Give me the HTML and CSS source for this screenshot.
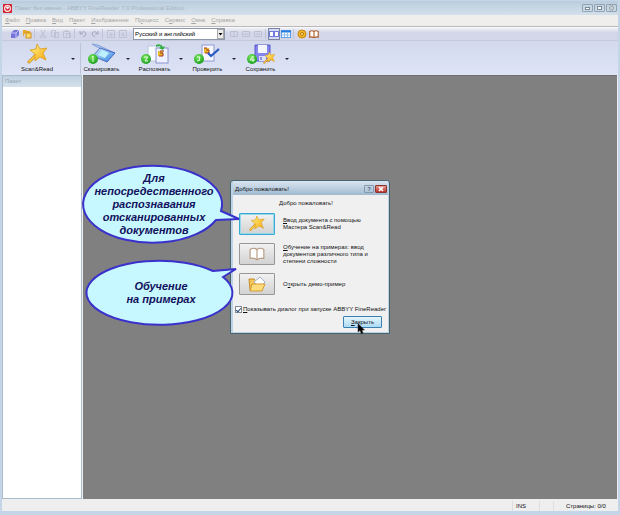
FILE: index.html
```html
<!DOCTYPE html>
<html lang="ru">
  <head>
    <meta charset="UTF-8" />
    <meta name="viewport" content="width=device-width, initial-scale=1.0" />
    <title>ABBYY FineReader</title>
    <link rel="stylesheet" href="styles.css" />
  </head>
  <body>
    <svg class="defs" width="0" height="0">
      <defs>
        <linearGradient id="gold" x1="0" y1="0" x2="1" y2="1">
          <stop offset="0" stop-color="#fff68a" />
          <stop offset="1" stop-color="#f7a50e" />
        </linearGradient>
        <linearGradient id="blue" x1="0" y1="0" x2="1" y2="1">
          <stop offset="0" stop-color="#d8f2ff" />
          <stop offset="1" stop-color="#2f7fe0" />
        </linearGradient>
        <radialGradient id="green" cx="0.4" cy="0.3" r="0.8">
          <stop offset="0" stop-color="#7be860" />
          <stop offset="1" stop-color="#0c9414" />
        </radialGradient>
        <g id="wand">
          <path d="M9 11 L2 18" stroke="#c98a1c" stroke-width="3" stroke-linecap="round" />
          <path d="M9 11 L2 18" stroke="#ffd044" stroke-width="1.6" stroke-linecap="round" />
          <path d="M10 0 L13 5 L20 4 L16 9 L19 16 L13 13 L8 17 L8 10 L3 6 L9 5 Z" fill="url(#gold)" stroke="#dc9a18" stroke-width="0.8" />
        </g>
        <g id="book">
          <path d="M1 2 Q4 0 7 2 Q10 0 13 2 V10 Q10 9 7 11 Q4 9 1 10 Z" fill="#fff" stroke="currentColor" />
          <path d="M7 2 V11" stroke="currentColor" />
        </g>
      </defs>
    </svg>

    <header class="titlebar">
      <svg class="logo" viewBox="0 0 10 10">
        <rect width="10" height="10" rx="1" fill="#d91f2c" />
        <circle cx="5" cy="5" r="3.2" fill="none" stroke="#fff" stroke-width="1.2" />
        <path d="M3 4 Q5 2 7 4 L5 6 Z" fill="#fff" />
      </svg>
      <span class="caption">Пакет без имени - ABBYY FineReader 7.0 Professional Edition</span>
      <div class="window-buttons">
        <button aria-label="Свернуть"><svg viewBox="0 0 9 6"><rect x="2.5" y="2.5" width="4" height="2" fill="#fff" stroke="#7c8996" /></svg></button>
        <button aria-label="Развернуть"><svg viewBox="0 0 9 6"><rect x="2.5" y="1.5" width="4" height="3" fill="#fff" stroke="#7c8996" /></svg></button>
        <button aria-label="Закрыть окно"><svg viewBox="0 0 9 6"><path d="M2.500 1 L6.500 5 M6.500 1 L2.500 5" stroke="#7c8996" stroke-width="2.4" /><path d="M2.500 1 L6.500 5 M6.500 1 L2.500 5" stroke="#fff" /></svg></button>
      </div>
    </header>

    <nav class="menu">
      <button><u>Ф</u>айл</button>
      <button><u>П</u>равка</button>
      <button><u>В</u>ид</button>
      <button>П<u>а</u>кет</button>
      <button><u>И</u>зображение</button>
      <button>П<u>р</u>оцесс</button>
      <button>С<u>е</u>рвис</button>
      <button><u>О</u>кна</button>
      <button><u>С</u>правка</button>
    </nav>

    <div class="toolbar">
      <div class="tools">
        <button aria-label="Новый пакет"><svg viewBox="0 0 10 10"><path d="M1 4 L4 1 H9 V6 L6 9 H1 Z" fill="#7774d8" /><path d="M1 4 H6 V9 M6 4 L9 1" stroke="#c4c4ff" fill="none" /></svg></button>
        <button aria-label="Открыть пакет"><svg viewBox="0 0 10 10"><path d="M1 1 H4 L5 2 H8 V4 H3 L1 8 Z" fill="#e8a720" /><rect x="4" y="4" width="5" height="5" fill="#ffd968" stroke="#d09020" /></svg></button>
      </div>
      <div class="tools">
        <button disabled aria-label="Вырезать"><svg viewBox="0 0 10 10"><path d="M3 1 L6 7 M7 1 L4 7" /><circle cx="3" cy="8" r="1" /><circle cx="7" cy="8" r="1" /></svg></button>
        <button disabled aria-label="Копировать"><svg viewBox="0 0 10 10"><path d="M1.5 1.5 h4 v6 h-4 Z M4.5 3.5 h4 v5 h-4 Z" /></svg></button>
        <button disabled aria-label="Вставить"><svg viewBox="0 0 10 10"><path d="M1.5 2.5 h6 v6 h-6 Z M3.5 1.5 h2 M4.5 4.5 h4 v4 h-4 Z" /></svg></button>
      </div>
      <div class="tools">
        <button disabled aria-label="Отменить"><svg viewBox="0 0 10 10"><path d="M2 2 V5 H5 M2 5 Q5 1 8 4 Q8 7 5 8" stroke="#a2a8c0" /></svg></button>
        <button disabled aria-label="Вернуть"><svg viewBox="0 0 10 10"><path d="M8 2 V5 H5 M8 5 Q5 1 2 4 Q2 7 5 8" stroke="#a2a8c0" /></svg></button>
      </div>
      <div class="tools">
        <button disabled aria-label="Предыдущая"><svg viewBox="0 0 10 10"><path d="M1.5 1.5 h7 v7 h-7 Z M5 3 v4 M3 5 l2 2 l2 -2" /></svg></button>
        <button disabled aria-label="Следующая"><svg viewBox="0 0 10 10"><path d="M1.5 1.5 h7 v7 h-7 Z M5 3 v4 M3 5 l2 2 l2 -2" /></svg></button>
      </div>
      <div class="language">
        <select aria-label="Язык распознавания">
          <option>Русский и английский</option>
        </select>
        <svg viewBox="0 0 7 10"><rect x="0.5" y="0.5" width="6" height="9" fill="#ececec" stroke="#a8a8a8" /><path d="M1.5 4 h4 l-2 2.5 Z" fill="#000" /></svg>
      </div>
      <div class="tools">
        <button disabled aria-label="Блок"><svg viewBox="0 0 10 10"><path d="M1.5 2.5 h7 v5 h-7 Z M5 3 v4" /></svg></button>
        <button disabled aria-label="Текст"><svg viewBox="0 0 10 10"><path d="M1.5 2.5 h7 v5 h-7 Z M2 5 h6" /></svg></button>
        <button disabled aria-label="Таблица"><svg viewBox="0 0 10 10"><path d="M1.5 2.5 h7 v5 h-7 Z M3 5 h4" /></svg></button>
      </div>
      <div class="tools">
        <button class="pressed" aria-label="Эскизы"><svg viewBox="0 0 10 10"><rect x="0.5" y="2.5" width="4" height="5" fill="#fff" stroke="#6d7de0" /><rect x="5.5" y="2.5" width="4" height="5" fill="#fff" stroke="#6d7de0" /></svg></button>
        <button aria-label="Список"><svg viewBox="0 0 10 10"><rect x="0.5" y="1.5" width="9" height="7" fill="#fff" stroke="#5ba0e8" /><path d="M0 2.5h10" stroke="#287ae0" stroke-width="2" /><path d="M1 6h8 M3.5 4v4 M6.5 4v4" stroke="#8cbcf0" /></svg></button>
      </div>
      <div class="tools">
        <button aria-label="Настройки"><svg viewBox="0 0 10 10"><circle cx="5" cy="5" r="4" fill="#f3b928" stroke="#c68612" /><circle cx="5" cy="5" r="1.5" fill="#fff0a0" stroke="#b87400" /></svg></button>
        <button aria-label="Справка"><svg viewBox="0 0 14 12" color="#b0602c"><use href="#book" stroke-width="1.6" /></svg></button>
      </div>
    </div>

    <div class="actions">
      <div class="action wizard">
        <button class="run"><svg viewBox="0 0 28 21"><use href="#wand" x="4" y="1" /></svg>Scan&amp;Read</button>
        <button class="more" aria-label="Ещё"></button>
      </div>
      <div class="action">
        <button class="run">
          <svg viewBox="0 0 28 21">
            <path d="M4 1 L10 2 L27 10 L25 11 L7 3 Z" fill="#a9c5f2" stroke="#6385c8" stroke-width="0.6" />
            <path d="M5 13 L12 5 L27 10 L19 19 Z" fill="url(#blue)" stroke="#3b55b8" stroke-width="0.8" />
            <path d="M10 12 L14 7 L21 10 L17 15 Z" fill="#bdf0ff" />
            <circle cx="5" cy="16" r="5" fill="url(#green)" />
            <path d="M4 14 l1 -1 v6" stroke="#e6ffe0" fill="none" />
          </svg>Сканировать
        </button>
        <button class="more" aria-label="Ещё"></button>
      </div>
      <div class="action">
        <button class="run">
          <svg viewBox="0 0 28 21">
            <rect x="7" y="3" width="10" height="15" fill="#f8fbff" stroke="#bcc6dd" />
            <rect x="15" y="5" width="12" height="15" fill="#eef1ff" stroke="#8c93cc" />
            <rect x="17" y="8" width="5" height="5" fill="#e8bd2d" />
            <path d="M19 8 h4 M19 10 h3 v3 h-4" stroke="#a62f20" fill="none" />
            <path d="M15 2 Q20 0 22 4 L24 3 L22 7 L18 5 L20 4 Q18 2 15 4 Z" fill="#2cae3c" />
            <circle cx="5" cy="16" r="5" fill="url(#green)" />
            <path d="M3 14 h4 l-3 4 h3" stroke="#e6ffe0" fill="none" />
          </svg>Распознать
        </button>
        <button class="more" aria-label="Ещё"></button>
      </div>
      <div class="action">
        <button class="run">
          <svg viewBox="0 0 28 21">
            <rect x="8" y="2" width="12" height="16" fill="#f5f6ff" stroke="#9299d0" />
            <rect x="10" y="5" width="5" height="5" fill="#e8bd2d" />
            <path d="M10 5 h3 M12 7 h3 v3 h-4" stroke="#a62f20" fill="none" />
            <path d="M14 10 L17 13 L25 6" stroke="#2759c0" stroke-width="2.2" fill="none" />
            <circle cx="5" cy="16" r="5" fill="url(#green)" />
            <path d="M3 14 h3 l-1 2 l1 1 l-3 1" stroke="#e6ffe0" fill="none" />
          </svg>Проверить
        </button>
        <button class="more" aria-label="Ещё"></button>
      </div>
      <div class="action">
        <button class="run">
          <svg viewBox="0 0 28 21">
            <path d="M8 2 h15 v16 h-15 Z" fill="#8585ed" stroke="#5656c6" />
            <rect x="11" y="2" width="9" height="8" fill="#f4f6ff" />
            <rect x="12" y="13" width="7" height="5" fill="#dcdffa" />
            <path d="M14 14 v3" stroke="#4545b5" />
            <use href="#wand" transform="translate(16 9) scale(0.6)" />
            <circle cx="5" cy="16" r="5" fill="url(#green)" />
            <path d="M6 13 v6 M6 13 l-3 4 h5" stroke="#e6ffe0" fill="none" />
          </svg>Сохранить
        </button>
        <button class="more" aria-label="Ещё"></button>
      </div>
    </div>

    <div class="workspace">
      <aside class="batch"><h2>Пакет</h2></aside>
      <main></main>
    </div>

    <footer class="status">
      <span class="cell">INS</span>
      <span class="cell"></span>
      <span class="cell pages">Страницы: 0/0</span>
    </footer>

    <div class="overlay">
      <div class="dialog" role="dialog" aria-labelledby="dialog-title">
        <div class="dialog-title">
          <span id="dialog-title">Добро пожаловать!</span>
          <button class="help" aria-label="Помощь">?</button>
          <button class="close" aria-label="Закрыть"><svg viewBox="0 0 12 8"><path d="M4 2 L8 6 M8 2 L4 6" stroke="#fff" stroke-width="1.6" /></svg></button>
        </div>
        <div class="dialog-body">
          <p class="welcome">Добро пожаловать!</p>
          <div class="choices">
            <button id="wizard" class="choice focused"><svg width="16" height="16" viewBox="0 0 21 21"><use href="#wand" /></svg></button>
            <label for="wizard"><u>В</u>вод документа с помощью<br />Мастера Scan&amp;Read</label>
            <button id="samples" class="choice"><svg width="16" height="14" viewBox="0 0 14 12" color="#b59a80"><use href="#book" /></svg></button>
            <label for="samples"><u>О</u>бучение на примерах: ввод<br />документов различного типа и<br />степени сложности</label>
            <button id="demo" class="choice">
              <svg width="18" height="16" viewBox="0 0 18 16">
                <path d="M1 3 H6 L8 5 V14 H2 Z" fill="#f5c65a" stroke="#c48c28" />
                <path d="M6 6 L12 1 L17 6 L12 12 Z" fill="#fff" stroke="#9fb4cc" />
                <path d="M4 8 H17 L14 15 H2 Z" fill="#ffdc7c" stroke="#d29a30" />
              </svg>
            </button>
            <label for="demo">О<u>т</u>крыть демо-пример</label>
          </div>
          <label class="show"><input type="checkbox" checked /><span><u>П</u>оказывать диалог при запуске ABBYY FineReader</span></label>
          <div class="dialog-footer"><button class="ok"><u>З</u>акрыть</button></div>
        </div>

        <div class="callout callout-wizard">
          <svg viewBox="0 0 158 80"><path d="M138 47 L156 55 L133 56 A69.500 38.500 0 1 1 138 47 Z" /></svg>
          <p>Для<br />непосредественного<br />распознавания<br />отсканированных<br />документов</p>
        </div>
        <div class="callout callout-samples">
          <svg viewBox="0 0 152 68"><path d="M127 12 L150 10 L137 18 A73 32 0 1 1 127 12 Z" /></svg>
          <p>Обучение<br />на примерах</p>
        </div>
        <svg class="cursor" viewBox="0 0 8 12"><path d="M1 0.500 V9 L3 7.500 L4.500 11 L6 10 L5 7 H7.500 Z" fill="#000" stroke="#333" stroke-width="0.500" /></svg>
      </div>
    </div>
  </body>
</html>
```

FILE: styles.css
```css
* {
  box-sizing: border-box;
}
body {
  margin: 0;
  min-height: 100vh;
  display: flex;
  flex-direction: column;
  position: relative;
  border: solid #c3d5e6;
  border-width: 1px 2px 4px;
  background: #efeeee;
  color: #111;
  font: 6px/8px "Liberation Sans", Arial, sans-serif;
}
button,
select {
  font: inherit;
  color: inherit;
  margin: 0;
  padding: 0;
  border: 0;
  background: none;
}
svg {
  display: block;
  fill: none;
}
p,
h2 {
  margin: 0;
}
.defs {
  position: absolute;
}

/* title and menu */
.titlebar {
  display: flex;
  align-items: center;
  height: 14px;
  padding: 0 1px;
  gap: 3px;
  background: linear-gradient(#bacddd, #d3e0ec);
}
.logo {
  width: 9px;
  height: 9px;
}
.caption {
  flex: 1;
  color: #a3b2c1;
}
.window-buttons {
  display: flex;
  gap: 1px;
}
.window-buttons button {
  width: 11px;
  height: 8px;
  border: 1px solid #94a3b1;
  border-radius: 1px;
}
.menu {
  display: flex;
  gap: 6px;
  height: 12px;
  padding: 0 3px 2px;
  border-bottom: 1px solid #b9b9b9;
  background: #efeeec;
  color: #a5a5a5;
}

/* small toolbar */
.toolbar {
  display: flex;
  align-items: center;
  height: 14px;
  padding-left: 5px;
  border-top: 1px solid #f8f9fc;
  border-bottom: 1px solid #c5c9da;
  background: linear-gradient(#f0f1f7, #d2d6e8 40%);
}
.tools {
  display: flex;
  gap: 2px;
  padding: 0 2px 0 3px;
}
.tools + .tools {
  border-left: 1px solid #c0c4d6;
}
.tools button {
  width: 10px;
  height: 10px;
}
.tools button:disabled {
  stroke: #bdc1d0;
}
.tools .pressed {
  background: #d5daf0;
  outline: 1px solid #7c84a4;
}
.language {
  position: relative;
  width: 92px;
  margin: 0 1px 0 3px;
}
.language select {
  display: block;
  width: 100%;
  height: 12px;
  padding-left: 1px;
  border: 1px solid #8d98a8;
  background: #fff;
  color: #000;
  appearance: none;
}
.language svg {
  position: absolute;
  top: 1px;
  right: 1px;
  width: 7px;
  height: 10px;
  pointer-events: none;
}

/* large buttons */
.actions {
  display: flex;
  height: 34px;
  padding: 2px 0 1px 2px;
  background: linear-gradient(#d3d9ed, #dee4f6);
}
.action {
  display: flex;
  width: 53px;
  flex: none;
}
.wizard {
  width: 77px;
  margin-right: 1px;
  padding-left: 4px;
  border-right: 1px solid #bcc4da;
}
.run {
  display: flex;
  flex-direction: column;
  align-items: center;
  gap: 1px;
  flex: 1;
  white-space: nowrap;
}
.run svg {
  width: 28px;
  height: 21px;
}
.more {
  width: 14px;
  padding: 0 5px;
}
.more::before {
  content: "";
  display: block;
  border: 2px solid transparent;
  border-top-color: #223;
  border-bottom: 0;
}

/* workspace */
.workspace {
  display: flex;
  flex: 1;
  gap: 1px;
}
.batch {
  width: 80px;
  background: #fff;
  border: 1px solid #a8bccb;
}
.batch h2 {
  height: 11px;
  padding: 1px 2px;
  background: linear-gradient(#bfd0df, #d5e1ec);
  color: #96a8b8;
  font: inherit;
}
.workspace main {
  flex: 1;
  margin-right: 1px;
  background: #808080;
  border-top: 1px solid #707070;
}
.status {
  display: flex;
  justify-content: flex-end;
  align-items: center;
  height: 12px;
  padding-top: 1px;
}
.cell {
  width: 27px;
  height: 10px;
  padding: 1px 3px;
  border-left: 1px solid #dedede;
}
.cell:nth-child(2) {
  width: 14px;
}
.status .pages {
  width: 65px;
  padding-left: 12px;
}

/* welcome dialog */
.overlay {
  position: absolute;
  inset: 0;
  display: grid;
  place-items: center;
  padding-top: 2px;
}
.dialog {
  position: relative;
  width: 160px;
  border: 1px solid #44646e;
  border-radius: 3px 3px 0 0;
  background: #bdd2e4;
  padding: 0 1px 1px 2px;
}
.dialog-title {
  display: flex;
  align-items: center;
  gap: 1px;
  height: 14px;
  padding: 1px 1px 0 2px;
  background: linear-gradient(#dbe6f1, #9fb9d0);
}
.dialog-title span {
  flex: 1;
}
.dialog-title button {
  height: 8px;
  border: 1px solid #8499ad;
  border-radius: 1px;
}
.help {
  width: 10px;
  color: #506478;
  font-weight: bold;
  line-height: 6px;
}
.dialog-title .close {
  width: 12px;
  border-color: #8e3430;
  background: linear-gradient(#e59a8c, #b93429);
}
.close svg {
  margin-top: -1px;
  margin-left: -1px;
  width: 12px;
  height: 8px;
}
.dialog-body {
  padding: 4px 6px 4px;
  background: #f0f0f0;
}
.welcome {
  padding-left: 40px;
}
.choices {
  display: grid;
  grid-template-columns: 36px 1fr;
  grid-auto-rows: 22px;
  gap: 8px;
  margin: 6px 0 10px;
  align-items: center;
  line-height: 7px;
  white-space: nowrap;
}
.choice {
  display: grid;
  place-items: center;
  height: 22px;
  border: 1px solid #979797;
  border-radius: 1px;
  background: linear-gradient(#f1f1f1, #d2d2d2);
}
.focused {
  border-color: #35a9cf;
  box-shadow: inset 0 0 0 1px #98d8ec;
}
.show {
  display: flex;
  align-items: center;
  gap: 1px;
  margin: 0 -4px 3px;
  white-space: nowrap;
}
.show input {
  appearance: none;
  flex: none;
  width: 7px;
  height: 7px;
  margin: 0;
  border: 1px solid #7f8c98;
  background: #fff;
}
.show input:checked::before {
  content: "";
  display: block;
  width: 2px;
  height: 4px;
  margin-left: 1px;
  border: solid #23457a;
  border-width: 0 1px 1px 0;
  transform: rotate(40deg);
}
.dialog-footer {
  display: flex;
  justify-content: flex-end;
}
.ok {
  width: 39px;
  height: 12px;
  border: 1px solid #3c7fb1;
  border-radius: 1px;
  background: linear-gradient(#e6f6fd, #a9daf3);
}
.cursor {
  position: absolute;
  right: 24px;
  bottom: -2px;
  width: 8px;
  height: 12px;
}

/* callouts over the window */
.callout {
  position: absolute;
  color: #11115c;
  font-size: 11px;
  line-height: 13px;
  font-weight: bold;
  font-style: italic;
  text-align: center;
}
.callout svg {
  width: 100%;
  overflow: visible;
  fill: #c8f8ff;
  stroke: #3a30cc;
  stroke-width: 2px;
}
.callout p {
  position: absolute;
  inset: 0 16px 0 0;
  display: grid;
  place-content: center;
}
.callout-wizard {
  left: -148px;
  top: -17px;
  width: 158px;
}
.callout-samples {
  left: -145px;
  top: 78px;
  width: 152px;
}
.callout-samples p {
  right: 2px;
}
```
